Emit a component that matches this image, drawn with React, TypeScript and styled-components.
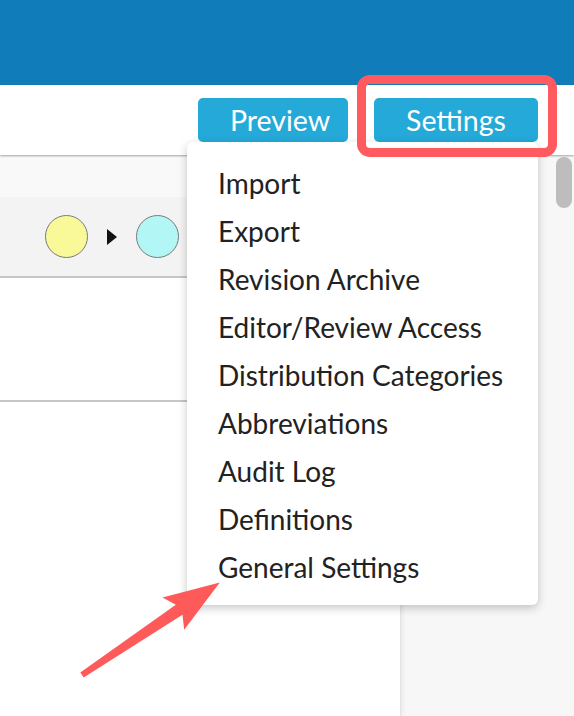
import React from "react";
import styled, { createGlobalStyle } from "styled-components";

const GlobalStyle = createGlobalStyle`
  html, body { margin: 0; padding: 0; }
  body {
    font-family: Lato, "Open Sans", "Liberation Sans", sans-serif;
    background: #ffffff;
    width: 574px;
    height: 716px;
    overflow: hidden;
  }
  * { box-sizing: border-box; }
`;

const Page = styled.div`
  position: relative;
  width: 574px;
  height: 716px;
  display: flex;
  flex-direction: column;
  overflow: hidden;
`;

const TopBar = styled.div`
  height: 85px;
  background: #107dba;
  flex-shrink: 0;
`;

const Toolbar = styled.div`
  height: 70px;
  flex-shrink: 0;
  background: #ffffff;
  display: flex;
  justify-content: flex-end;
  align-items: flex-start;
  padding: 13px 36px 0 0;
  gap: 26px;
  box-shadow: 0 1px 2px rgba(0, 0, 0, 0.35);
  position: relative;
  z-index: 2;
`;

const ToolButton = styled.button<{ $w: number; $shift?: number }>`
  width: ${(p) => p.$w}px;
  height: 44px;
  border: none;
  border-radius: 5px;
  background: #25a9d8;
  color: #ffffff;
  font-family: Lato, "Open Sans", sans-serif;
  font-size: 28.5px;
  line-height: 44px;
  padding: 0 0 0 ${(p) => p.$shift ?? 0}px;
  cursor: pointer;
`;

const Body = styled.div`
  flex: 1;
  display: flex;
  background: #f7f7f7;
  min-height: 0;
`;

const LeftPanel = styled.div`
  width: 401px;
  flex-shrink: 0;
  background: #ffffff;
  border-right: 1px solid #e4e4e4;
  box-shadow: 2px 0 4px rgba(0, 0, 0, 0.06);
  display: flex;
  flex-direction: column;
`;

const PanelHeader = styled.div`
  height: 42px;
  background: #f9f9f9;
`;

const FlowRow = styled.div`
  height: 81px;
  background: #f3f3f3;
  border-bottom: 2px solid #c6c6c6;
  display: flex;
  align-items: center;
  padding: 0 0 0 45px;
  gap: 19px;
`;

const Dot = styled.div<{ $color: string }>`
  width: 43px;
  height: 43px;
  border-radius: 50%;
  background: ${(p) => p.$color};
  border: 1.5px solid #7a7a7a;
  flex-shrink: 0;
`;

const Caret = styled.div`
  width: 0;
  height: 0;
  border-top: 8px solid transparent;
  border-bottom: 8px solid transparent;
  border-left: 10px solid #111111;
`;

const Section = styled.div`
  height: 124px;
  border-bottom: 2px solid #c6c6c6;
`;

const Spacer = styled.div`
  flex: 1;
`;

const RightArea = styled.div`
  flex: 1;
  display: flex;
  justify-content: flex-end;
  padding: 2px 2px 0 0;
`;

const ScrollTrack = styled.div`
  width: 16px;
`;

const ScrollThumb = styled.div`
  width: 16px;
  height: 51px;
  border-radius: 8px;
  background: #bdbdbd;
`;

const Menu = styled.ul`
  position: absolute;
  left: 187px;
  top: 142px;
  width: 351px;
  height: 463px;
  margin: 0;
  padding: 17px 0 14px 0;
  list-style: none;
  background: #ffffff;
  border-radius: 6px;
  box-shadow: 0 3px 10px rgba(0, 0, 0, 0.22);
  z-index: 5;
`;

const MenuItem = styled.li`
  height: 48px;
  line-height: 48px;
  padding-left: 31px;
  font-size: 28px;
  color: #222222;
  white-space: nowrap;
`;

const Highlight = styled.div`
  position: absolute;
  left: 357px;
  top: 75px;
  width: 200px;
  height: 82px;
  border: 9px solid #ff5a5f;
  border-radius: 13px;
  z-index: 6;
  pointer-events: none;
`;

const ArrowSvg = styled.svg`
  position: absolute;
  left: 0;
  top: 0;
  z-index: 7;
  pointer-events: none;
`;

const items = [
  "Import",
  "Export",
  "Revision Archive",
  "Editor/Review Access",
  "Distribution Categories",
  "Abbreviations",
  "Audit Log",
  "Definitions",
  "General Settings",
];

export default function App() {
  const angle = (Math.atan2(583 - 675, 219 - 82) * 180) / Math.PI;
  return (
    <Page>
      <GlobalStyle />
      <TopBar />
      <Toolbar>
        <ToolButton $w={150} $shift={14}>Preview</ToolButton>
        <ToolButton $w={164}>Settings</ToolButton>
      </Toolbar>
      <Body>
        <LeftPanel>
          <PanelHeader />
          <FlowRow>
            <Dot $color="#f9f99a" />
            <Caret />
            <Dot $color="#b3f6f6" />
          </FlowRow>
          <Section />
          <Spacer />
        </LeftPanel>
        <RightArea>
          <ScrollTrack>
            <ScrollThumb />
          </ScrollTrack>
        </RightArea>
      </Body>
      <Menu>
        {items.map((t) => (
          <MenuItem key={t}>{t}</MenuItem>
        ))}
      </Menu>
      <Highlight />
      <ArrowSvg width="574" height="716" viewBox="0 0 574 716">
        <g transform={`translate(82 675) rotate(${angle})`}>
          <polygon
            points="0,-3 117,-6 110,-19.5 166,0 110,19.5 117,6 0,3"
            fill="#ff5a5a"
            strokeLinejoin="round"
          />
        </g>
      </ArrowSvg>
    </Page>
  );
}
